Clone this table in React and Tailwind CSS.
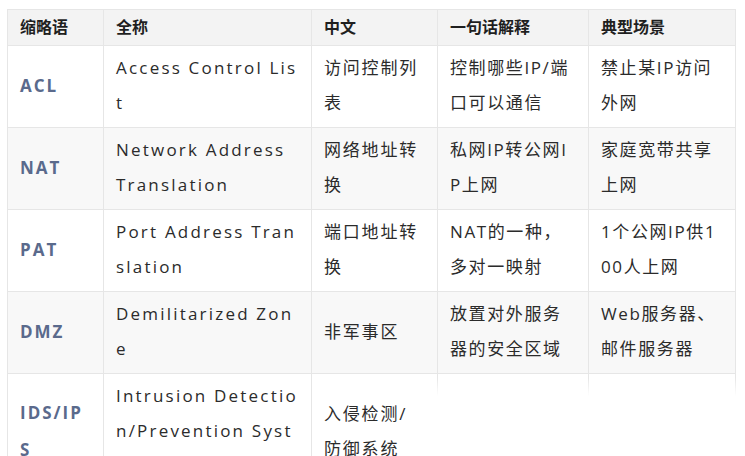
const rows = [
  {
    abbr: "ACL",
    full: "Access Control List",
    zh: "访问控制列表",
    desc: "控制哪些IP/端口可以通信",
    scene: "禁止某IP访问外网",
  },
  {
    abbr: "NAT",
    full: "Network Address Translation",
    zh: "网络地址转换",
    desc: "私网IP转公网IP上网",
    scene: "家庭宽带共享上网",
  },
  {
    abbr: "PAT",
    full: "Port Address Translation",
    zh: "端口地址转换",
    desc: "NAT的一种，多对一映射",
    scene: "1个公网IP供100人上网",
  },
  {
    abbr: "DMZ",
    full: "Demilitarized Zone",
    zh: "非军事区",
    desc: "放置对外服务器的安全区域",
    scene: "Web服务器、邮件服务器",
  },
  {
    abbr: "IDS/IPS",
    full: "Intrusion Detection/Prevention System",
    zh: "入侵检测/防御系统",
    desc: "",
    scene: "",
  },
];

const headers = ["缩略语", "全称", "中文", "一句话解释", "典型场景"];

const cell = "border border-[#e6e6e6] px-[12px] pt-[4px] pb-[7px] text-[17px] leading-[35px] break-all";

function App() {
  return (
    <div
      className="relative w-[745px] h-[456px] overflow-hidden bg-white pt-[9px] pl-[7px]"
      style={{ fontFamily: '"Open Sans", "Noto Sans CJK SC", sans-serif' }}
    >
      <table className="table-fixed border-collapse w-[728px] text-[#2b2b2b]">
        <colgroup>
          <col className="w-[96px]" />
          <col className="w-[208px]" />
          <col className="w-[126px]" />
          <col className="w-[151px]" />
          <col className="w-[147px]" />
        </colgroup>
        <thead>
          <tr className="h-[36px] bg-[#f3f3f3]">
            {headers.map((h) => (
              <th
                key={h}
                className="border border-[#e6e6e6] px-[12px] pb-[2px] text-left text-[16px] font-bold text-[#1f1f1f] leading-none"
              >
                {h}
              </th>
            ))}
          </tr>
        </thead>
        <tbody>
          {rows.map((r, i) => (
            <tr key={r.abbr} className={i % 2 === 1 ? "bg-[#f8f8f8]" : "bg-white"}>
              <td className="border border-[#e6e6e6] px-[12px] pt-[4px] pb-[7px] text-[17px] font-bold tracking-[2px] leading-[37px] text-[#5a6a8c] break-all">
                {r.abbr}
              </td>
              <td className={cell + " tracking-[2.2px]"}>{r.full}</td>
              <td className={cell + " tracking-[1.8px]"}>{r.zh}</td>
              <td className={cell + " tracking-[1.6px]"}>{r.desc}</td>
              <td className={cell + " tracking-[1.6px]"}>{r.scene}</td>
            </tr>
          ))}
        </tbody>
      </table>
      {/* the picture fades out at the bottom right */}
      <div className="absolute left-[436px] right-0 top-[378px] bottom-0 bg-linear-to-b from-white/0 to-white to-[18px]" />
    </div>
  );
}

export default App;
